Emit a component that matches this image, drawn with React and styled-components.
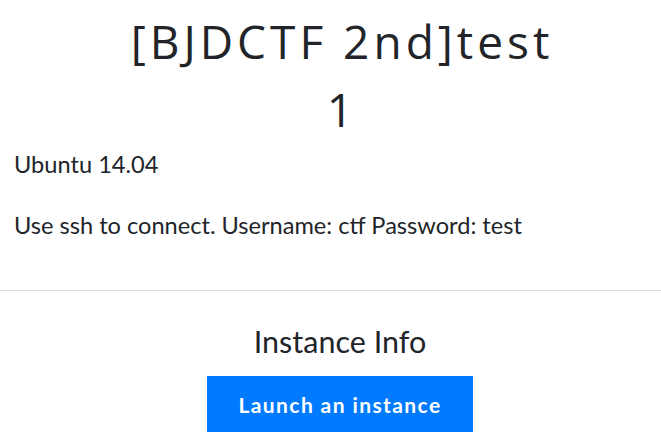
import React from "react";
import styled, { createGlobalStyle } from "styled-components";

const Global = createGlobalStyle`
  html, body {
    margin: 0;
    padding: 0;
    background: #fff;
    color: #212529;
    font-family: "Lato", "Liberation Sans", sans-serif;
    overflow: hidden;
  }
`;

const Page = styled.div`
  display: flex;
  flex-direction: column;
  width: 680px;
`;

const Header = styled.div`
  padding: 0 14px;
`;

const Title = styled.h3`
  margin: 7px 0 6px 0;
  padding-left: 4px;
  text-align: center;
  font-family: "Open Sans", "Liberation Sans", sans-serif;
  font-weight: 400;
  font-size: 46px;
  line-height: 68px;
  letter-spacing: 4px;
  color: #212529;
`;

const Text = styled.p`
  margin: 0 0 ${(p) => p.gap || 0}px 0;
  font-size: 23.6px;
  line-height: 30px;
`;

const Divider = styled.hr`
  margin: 50px 0 0 0;
  width: 661px;
  border: 0;
  border-top: 1px solid #ddd;
`;

const Instance = styled.div`
  display: flex;
  flex-direction: column;
  align-items: center;
  padding-top: 31px;
`;

const SubTitle = styled.h4`
  margin: 0 0 16px 0;
  font-weight: 400;
  font-size: 30.5px;
  line-height: 38px;
  color: #212529;
`;

const LaunchButton = styled.button`
  width: 266px;
  height: 56px;
  border: 0;
  border-radius: 0;
  background: #007bff;
  color: #fff;
  font-family: "Lato", "Liberation Sans", sans-serif;
  font-weight: 700;
  font-size: 21px;
  letter-spacing: 1.4px;
  cursor: pointer;
`;

export default function App() {
  return (
    <Page>
      <Global />
      <Header>
        <Title>
          [BJDCTF 2nd]test
          <br />1
        </Title>
        <Text gap={31}>Ubuntu 14.04</Text>
        <Text>Use ssh to connect. Username: ctf Password: test</Text>
      </Header>
      <Divider />
      <Instance>
        <SubTitle>Instance Info</SubTitle>
        <LaunchButton>Launch an instance</LaunchButton>
      </Instance>
    </Page>
  );
}
